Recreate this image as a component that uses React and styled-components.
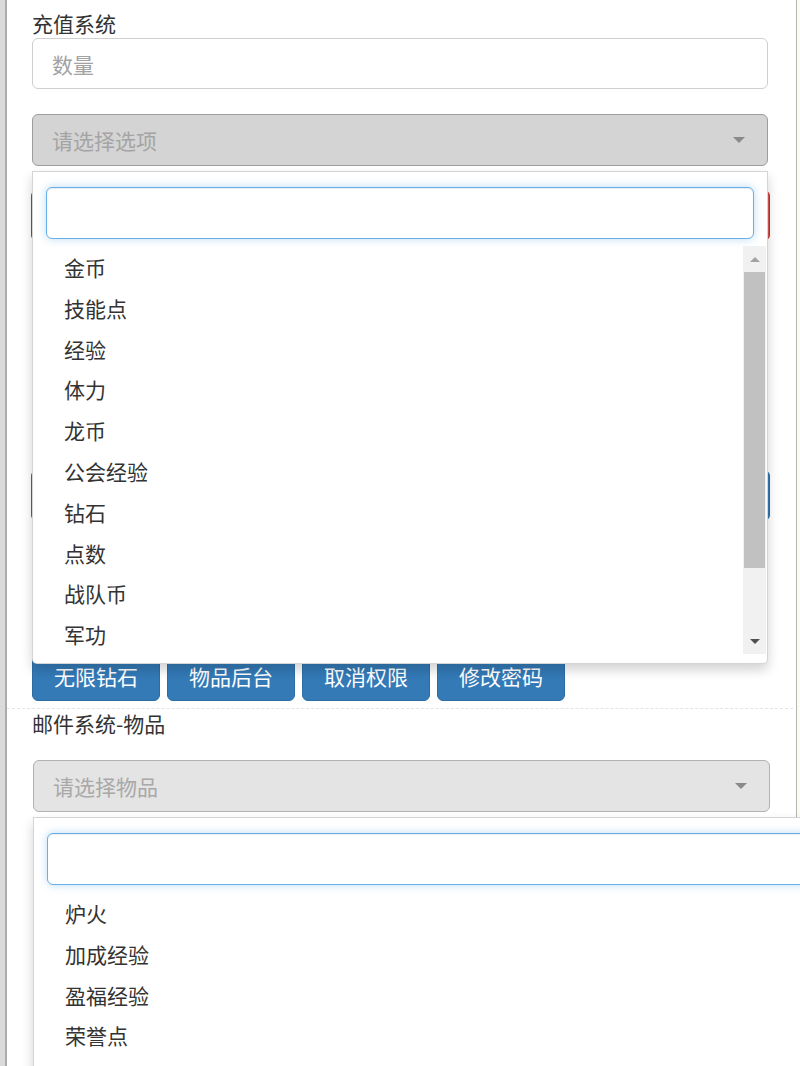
import styled, { createGlobalStyle } from 'styled-components';

const GlobalStyle = createGlobalStyle`
  html, body {
    margin: 0;
    padding: 0;
    overflow: hidden;
    background: #ffffff;
  }
  body {
    font-family: 'Noto Sans CJK SC', 'Noto Sans', sans-serif;
    color: #333;
  }
  * {
    box-sizing: border-box;
  }
`;

const Frame = styled.div`
  display: flex;
  width: 800px;
  height: 1066px;
  overflow: hidden;
`;

const Sidebar = styled.div`
  flex: 0 0 7px;
  background: #dadada;
  border-right: 2px solid #ababab;
`;

const Main = styled.main`
  flex: 0 0 790px;
  padding: 11px 28px 0 25px;
  border-right: 1px solid #b4b4b4;
  background: #fff;
`;

const Gutter = styled.div`
  flex: 1;
  background: #fcfcf0;
`;

const Label = styled.div`
  font-size: 21px;
  line-height: 25px;
  color: #333;
  margin-top: ${(p) => p.$top || 0}px;
`;

const TextInput = styled.div`
  height: 51px;
  margin-top: 2px;
  border: 1px solid #cfcfcf;
  border-radius: 6px;
  padding-left: 19px;
  display: flex;
  align-items: center;
  font-size: 21px;
  color: #a2a2a2;
  background: #fff;
`;

const SelectWrap = styled.div`
  position: relative;
  margin: ${(p) => p.$margin};
  z-index: ${(p) => p.$z};
`;

const SelectBox = styled.div`
  height: 52px;
  border: 1px solid ${(p) => (p.$light ? '#b1b1b1' : '#9e9e9e')};
  border-radius: 6px;
  background: ${(p) => (p.$light ? '#e4e4e4' : '#d4d4d4')};
  padding: 0 22px 0 19px;
  display: flex;
  align-items: center;
  justify-content: space-between;
  font-size: 21px;
  color: ${(p) => (p.$light ? '#a8a8a8' : '#a4a4a4')};
`;

const Caret = styled.span`
  width: 0;
  height: 0;
  border-left: 6px solid transparent;
  border-right: 6px solid transparent;
  border-top: 6px solid #8a8a8a;
`;

const Panel = styled.div`
  position: absolute;
  top: calc(100% + 5px);
  left: 0;
  right: ${(p) => p.$right}px;
  height: 493px;
  background: #fff;
  border: 1px solid rgba(0, 0, 0, 0.17);
  border-radius: 0 0 5px 5px;
  box-shadow: 0 6px 12px rgba(0, 0, 0, 0.175);
  display: flex;
  flex-direction: column;
`;

const SearchRow = styled.div`
  padding: 15px 13px 7px;
`;

const SearchInput = styled.div`
  height: 52px;
  border: 1px solid #66afe9;
  border-radius: 6px;
  background: #fff;
  box-shadow: inset 0 1px 1px rgba(0, 0, 0, 0.075), 0 0 8px rgba(102, 175, 233, 0.45);
`;

const ListRow = styled.div`
  display: flex;
  height: 408px;
  padding-right: 1px;
`;

const Items = styled.ul`
  flex: 1;
  list-style: none;
  margin: 0;
  padding: 1px 0 0;
  overflow: hidden;
`;

const Item = styled.li`
  height: 40.8px;
  line-height: 40.8px;
  padding-left: 31px;
  font-size: 21px;
  color: #333;
`;

const Scrollbar = styled.div`
  flex: 0 0 23px;
  background: #f1f1f1;
  display: flex;
  flex-direction: column;
  align-items: center;
`;

const Arrow = styled.span`
  flex: 0 0 26px;
  display: flex;
  align-items: center;
  justify-content: center;
  &::before {
    content: '';
    border-left: 5px solid transparent;
    border-right: 5px solid transparent;
    ${(p) =>
      p.$down
        ? 'border-top: 5px solid #505050;'
        : 'border-bottom: 5px solid #a3a3a3;'}
  }
`;

const Thumb = styled.div`
  width: 21px;
  height: 296px;
  background: #c1c1c1;
`;

const TrackRest = styled.div`
  flex: 1;
`;

// blocks that sit under the open option menu; only the coloured ones peek out
const Block = styled.div`
  height: ${(p) => p.$h || 51}px;
  margin: ${(p) => p.$top}px ${(p) => (p.$bg ? '-2px 0 -1px' : '0 0 0')};
  border-radius: 6px;
  background: ${(p) => p.$bg || '#fff'};
  border: 1px solid ${(p) => p.$border || 'transparent'};
`;

const ButtonRow = styled.div`
  display: flex;
  gap: 7px;
  margin-top: 20px;
`;

const Button = styled.button`
  width: 128px;
  height: 51px;
  border: 1px solid #2e6da4;
  border-radius: 6px;
  background: #337ab7;
  color: #fff;
  font-family: 'Noto Sans CJK SC', 'Noto Sans', sans-serif;
  font-size: 21px;
  padding: 0;
`;

const Divider = styled.hr`
  margin: 7px -25px 0 -25px;
  border: 0;
  border-top: 1px dashed #e4e4e4;
`;

const Dropdown = ({ items, right = 0 }) => (
  <Panel $right={right}>
    <SearchRow>
      <SearchInput />
    </SearchRow>
    <ListRow>
      <Items>
        {items.map((item) => (
          <Item key={item}>{item}</Item>
        ))}
      </Items>
      <Scrollbar>
        <Arrow />
        <Thumb />
        <TrackRest />
        <Arrow $down />
      </Scrollbar>
    </ListRow>
  </Panel>
);

const currencies = ['金币', '技能点', '经验', '体力', '龙币', '公会经验', '钻石', '点数', '战队币', '军功'];
const goods = ['炉火', '加成经验', '盈福经验', '荣誉点'];

const App = () => (
  <>
    <GlobalStyle />
    <Frame>
      <Sidebar />
      <Main>
        <Label>充值系统</Label>
        <TextInput>数量</TextInput>
        <SelectWrap $margin="25px 0 0" $z={5}>
          <SelectBox>
            请选择选项
            <Caret />
          </SelectBox>
          <Dropdown items={currencies} />
        </SelectWrap>
        <Block $top={24} $bg="#d9534f" $border="#c9302c" />
        <Block $top={24} />
        <Block $top={24} />
        <Block $top={79} $bg="#337ab7" $border="#2e6da4" />
        <Block $top={24} $h={25} />
        <Block $top={9} />
        <ButtonRow>
          <Button>无限钻石</Button>
          <Button>物品后台</Button>
          <Button>取消权限</Button>
          <Button>修改密码</Button>
        </ButtonRow>
        <Divider />
        <Label $top={2}>邮件系统-物品</Label>
        <SelectWrap $margin="24px -2px 0 1px" $z={6}>
          <SelectBox $light>
            请选择物品
            <Caret />
          </SelectBox>
          <Dropdown items={goods} right={-60} />
        </SelectWrap>
      </Main>
      <Gutter />
    </Frame>
  </>
);

export default App;
